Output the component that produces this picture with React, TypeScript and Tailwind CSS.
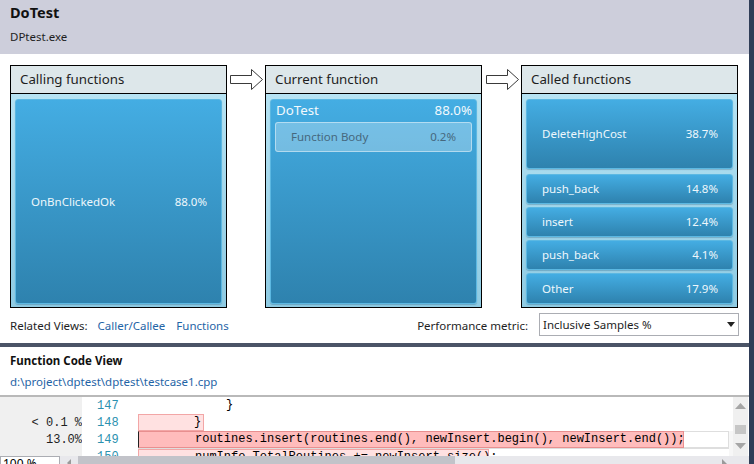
import React from "react";

const ui = "font-['Segoe_UI','Noto_Sans',sans-serif]";
const mono = "font-['Liberation_Mono','DejaVu_Sans_Mono',monospace]";

function Arrow({ ml }: { ml: string }) {
  return (
    <div className={`${ml} mt-[3px] w-[36px] shrink-0`}>
      <svg width="35" height="24" viewBox="0 0 35 24">
        <polygon
          points="1.5,7.5 22.5,7.5 22.5,1.5 33.5,11.5 22.5,21.5 22.5,15.5 1.5,15.5"
          fill="#ffffff"
          stroke="#3a3a3a"
          strokeWidth="1"
        />
      </svg>
    </div>
  );
}

function Panel({ title, children }: { title: string; children: React.ReactNode }) {
  return (
    <div className="w-[217px] h-[243px] shrink-0 border border-black flex flex-col bg-white">
      <div className="h-[28px] bg-[#dde7ea] border-b border-black pl-[9px] flex items-center text-[13.3px] text-[#1e1e1e]">
        {title}
      </div>
      <div className="flex-1 bg-gradient-to-b from-[#b6e3f3] to-[#8fcbe3] pt-[5px] pl-[4px] pr-[4px] pb-[3px] flex flex-col">
        {children}
      </div>
    </div>
  );
}

const tile =
  "rounded-[3px] bg-gradient-to-b from-[#44ade3] to-[#2e82ae] border border-[#5cb8e2] shadow-[0_1px_1px_rgba(0,60,100,0.25)] text-[#eef7fc]";

function CalledTile({ name, pct, h, mt }: { name: string; pct: string; h: string; mt: string }) {
  return (
    <div className={`${tile} ${h} ${mt} flex items-center justify-between pl-[15px] pr-[14px] text-[11.5px]`}>
      <span>{name}</span>
      <span>{pct}</span>
    </div>
  );
}

export default function App() {
  return (
    <div className={`w-[754px] h-[464px] overflow-hidden flex bg-white ${ui}`}>
      <div className="w-[749px] flex flex-col">
        {/* Header */}
        <div className="h-[54px] bg-[#cdcedb] pl-[10px] flex flex-col shrink-0">
          <div className="mt-[3px] h-[20px] flex items-center text-[14.5px] font-bold text-[#111]">DoTest</div>
          <div className="mt-[5px] h-[18px] flex items-center text-[11.5px] text-[#1e1e1e]">DPtest.exe</div>
        </div>

        {/* Panels */}
        <div className="pt-[11px] pl-[10px] flex items-start shrink-0 h-[254px]">
          <Panel title="Calling functions">
            <div className={`${tile} flex-1 flex items-center justify-between pl-[15px] pr-[14px] text-[11.5px]`}>
              <span>OnBnClickedOk</span>
              <span>88.0%</span>
            </div>
          </Panel>
          <Arrow ml="ml-[2px]" />
          <Panel title="Current function">
            <div className={`${tile} flex-1 flex flex-col px-[4px]`}>
              <div className="h-[22px] flex items-center justify-between pl-[1px] pr-[0px] text-[13.3px] text-[#f2f9fd]">
                <span>DoTest</span>
                <span>88.0%</span>
              </div>
              <div className="h-[30px] rounded-[3px] bg-[rgba(255,255,255,0.28)] border border-[rgba(255,255,255,0.45)] flex items-center justify-between pl-[15px] pr-[15px] text-[11.5px] text-[#46687e]">
                <span>Function Body</span>
                <span>0.2%</span>
              </div>
            </div>
          </Panel>
          <Arrow ml="ml-[3px]" />
          <Panel title="Called functions">
            <CalledTile name="DeleteHighCost" pct="38.7%" h="h-[70px]" mt="mt-0" />
            <CalledTile name="push_back" pct="14.8%" h="h-[30px]" mt="mt-[5px]" />
            <CalledTile name="insert" pct="12.4%" h="h-[30px]" mt="mt-[3px]" />
            <CalledTile name="push_back" pct="4.1%" h="h-[30px]" mt="mt-[3px]" />
            <CalledTile name="Other" pct="17.9%" h="flex-1" mt="mt-[3px]" />
          </Panel>
        </div>

        {/* Related views row */}
        <div className="h-[35px] shrink-0 flex items-center pl-[10px] pr-[10px] text-[11.5px] text-[#1e1e1e]">
          <span>Related Views:</span>
          <span className="ml-[10px] text-[#1f64a6]">Caller/Callee</span>
          <span className="ml-[11px] text-[#1f64a6]">Functions</span>
          <span className="ml-auto">Performance metric:</span>
          <div className="ml-[11px] w-[200px] h-[23px] border border-[#abadb3] bg-white flex items-center pl-[3px] pr-[3px] mb-[2px]">
            <span className="flex-1">Inclusive Samples %</span>
            <svg width="8" height="5" viewBox="0 0 8 5">
              <polygon points="0,0 8,0 4,5" fill="#222" />
            </svg>
          </div>
        </div>

        {/* Divider */}
        <div className="h-[4px] bg-[#4b5467] shrink-0" />

        {/* Function code view header */}
        <div className="h-[48px] shrink-0 pl-[10px] flex flex-col">
          <div className="mt-[6px] h-[16px] flex items-center text-[11.5px] font-bold text-[#111]">Function Code View</div>
          <div className="mt-[4px] h-[17px] flex items-center text-[11.5px] text-[#1f64a6]">d:\project\dptest\dptest\testcase1.cpp</div>
        </div>
        <div className="h-[2px] bg-[#b9b9b9] shrink-0" />

        {/* Code area */}
        <div className={`h-[59px] shrink-0 flex ${mono} text-[12px] overflow-hidden`}>
          <div className="w-[82px] bg-[#f0f0f0] pt-[1px] text-right text-[#1e1e1e]">
            <div className="h-[17px] leading-[17px]">&nbsp;</div>
            <div className="h-[17px] leading-[17px] whitespace-pre">{"< 0.1 %"}</div>
            <div className="h-[17px] leading-[17px]">13.0%</div>
          </div>
          <div className="w-[56px] bg-white pt-[1px] pl-[15px] text-[#2b91af]">
            <div className="h-[17px] leading-[17px]">147</div>
            <div className="h-[17px] leading-[17px]">148</div>
            <div className="h-[17px] leading-[17px]">149</div>
            <div className="h-[17px] leading-[17px]">150</div>
          </div>
          <div className="flex-1 bg-[#f7f7f7] flex flex-col text-black">
            <div className="h-[1px] w-[387px] bg-[#f2a3a3]" />
            <div className="h-[17px] bg-white leading-[17px] pl-[88px] whitespace-pre">{"}"}</div>
            <div className="h-[17px] bg-white flex">
              <div className="w-[66px] h-[17px] bg-[#ffe1e1] border border-[#f2a6a6] leading-[15px] pl-[55px]">{"}"}</div>
            </div>
            <div className="h-[17px] flex bg-white w-[591px] border border-[#dedede] border-l-0">
              <div className="w-[546px] h-[17px] -mt-[1px] bg-[#ffbcbc] border border-[#e88f8f] border-l-[#222] leading-[15px] pl-[56px] whitespace-pre">
                {"routines.insert(routines.end(), newInsert.begin(), newInsert.end());"}
              </div>
            </div>
            <div className="h-[17px] flex bg-white w-[591px] border-t border-[#dedede]">
              <div className="w-[351px] h-[17px] bg-[#ffe1e1] border border-[#f2a6a6] leading-[15px] pl-[56px] whitespace-pre">
                {"numInfo.TotalRoutines += newInsert.size();"}
              </div>
            </div>
          </div>
          <div className="w-[15px] bg-[#f0f0f0] flex flex-col items-center pt-[6px]">
            <svg width="11" height="6" viewBox="0 0 11 6">
              <polygon points="0,6 11,6 5.5,0" fill="#a6a6a6" />
            </svg>
            <div className="mt-[16px] w-[11px] h-[9px] bg-[#c6c6c6]" />
            <svg className="mt-[9px]" width="11" height="6" viewBox="0 0 11 6">
              <polygon points="0,0 11,0 5.5,6" fill="#a6a6a6" />
            </svg>
          </div>
          <div className="w-[1px] bg-white" />
        </div>

        {/* Horizontal scrollbar */}
        <div className="h-[8px] shrink-0 flex bg-[#e8e8ec] overflow-hidden">
          <div className={`w-[60px] h-[14px] border border-[#abadb3] bg-white text-[12px] leading-[14px] pl-[2px] ${ui}`}>100 %</div>
          <div className="w-[18px] flex items-start pt-[3px] pl-[7px]">
            <svg width="4" height="8" viewBox="0 0 4 8">
              <polygon points="4,0 4,8 0,4" fill="#9a9a9a" />
            </svg>
          </div>
          <div className="w-[377px] bg-[#c2c3c9]" />
          <div className="flex-1" />
          <div className="w-[27px] pt-[3px]">
            <svg width="6" height="6" viewBox="0 0 6 6">
              <polygon points="0,0 6,6 0,6" fill="#9a9a9a" />
            </svg>
          </div>
        </div>
      </div>
      <div className="w-[5px] bg-[#2f3d57]" />
    </div>
  );
}
